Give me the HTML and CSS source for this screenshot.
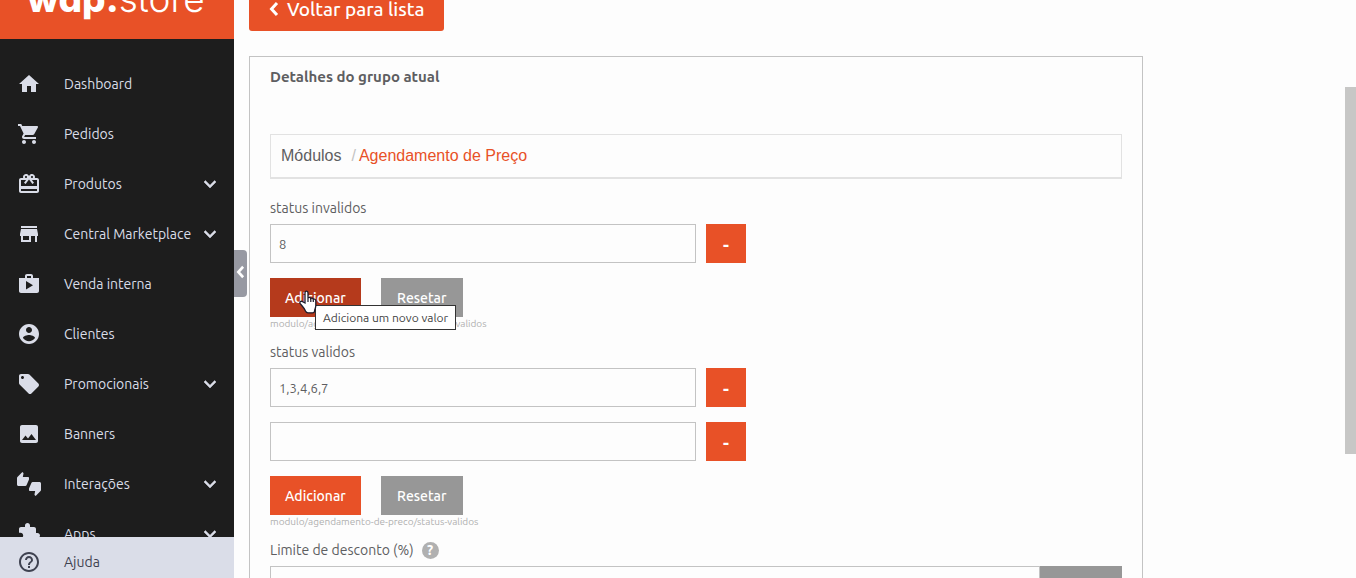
FILE: index.html
```html
<!DOCTYPE html>
<html lang="pt-BR">
<head>
<meta charset="utf-8">
<title>Agendamento de Preço - wap.store</title>
<link rel="stylesheet" href="styles.css">
</head>
<body>
<svg class="sprite" aria-hidden="true">
  <symbol id="chevron" viewBox="0 0 24 24"><path d="M16.59 8.59 12 13.17 7.41 8.59 6 10l6 6 6-6z" stroke="currentColor" stroke-width=".5"/></symbol>
  <symbol id="back" viewBox="0 0 10 16"><path d="M8 2 2.500 8 8 14" fill="none" stroke="currentColor" stroke-width="3"/></symbol>
</svg>
<div class="app">
  <aside class="sidebar">
    <a class="brand" href="#"><span class="brand-bold">wap.</span><span class="brand-thin">store</span></a>
    <nav class="menu">
      <a class="item" href="#"><svg class="icon" viewBox="0 0 24 24"><path d="M10 20v-6h4v6h5v-8h3L12 3 2 12h3v8z"/></svg><span class="item-label">Dashboard</span></a>
      <a class="item" href="#"><svg class="icon" viewBox="0 0 24 24"><path d="M7 18c-1.100 0-1.990.9-1.990 2S5.900 22 7 22s2-.9 2-2-.9-2-2-2zM1 2v2h2l3.600 7.590-1.350 2.450c-.16.28-.25.61-.25.96 0 1.100.9 2 2 2h12v-2H7.420c-.14 0-.25-.11-.25-.25l.03-.12.9-1.630h7.450c.75 0 1.410-.41 1.750-1.030l3.580-6.490c.08-.14.12-.31.12-.48 0-.55-.45-1-1-1H5.210l-.94-2H1zm16 16c-1.100 0-1.990.9-1.990 2s.89 2 1.990 2 2-.9 2-2-.9-2-2-2z"/></svg><span class="item-label">Pedidos</span></a>
      <a class="item" href="#"><svg class="icon" viewBox="0 0 24 24"><path d="M20 6h-2.180c.11-.31.18-.65.18-1 0-1.660-1.340-3-3-3-1.050 0-1.960.54-2.500 1.350l-.5.67-.5-.68C10.960 2.540 10.050 2 9 2 7.340 2 6 3.340 6 5c0 .35.070.69.180 1H4c-1.110 0-1.990.89-1.990 2L2 19c0 1.110.89 2 2 2h16c1.110 0 2-.89 2-2V8c0-1.110-.89-2-2-2zm-5-2c.55 0 1 .45 1 1s-.45 1-1 1-1-.45-1-1 .45-1 1-1zM9 4c.55 0 1 .45 1 1s-.45 1-1 1-1-.45-1-1 .45-1 1-1zm11 15H4v-2h16v2zm0-5H4V8h5.080L7 10.830 8.620 12 11 8.760l1-1.360 1 1.360L15.380 12 17 10.830 14.920 8H20v6z"/></svg><span class="item-label">Produtos</span><svg class="icon" viewBox="0 0 24 24"><use href="#chevron"/></svg></a>
      <a class="item" href="#"><svg class="icon" viewBox="0 0 24 24"><path d="M20 4H4v2h16V4zm1 10v-2l-1-5H4l-1 5v2h1v6h10v-6h4v6h2v-6h1zm-9 4H6v-4h6v4z"/></svg><span class="item-label">Central Marketplace</span><svg class="icon" viewBox="0 0 24 24"><use href="#chevron"/></svg></a>
      <a class="item" href="#"><svg class="icon" viewBox="0 0 24 24"><path fill-rule="evenodd" d="M16 6V4c0-1.110-.89-2-2-2h-4c-1.110 0-2 .89-2 2v2H2v13c0 1.110.89 2 2 2h16c1.110 0 2-.89 2-2V6h-6zm-6-2h4v2h-4V4zM9 17.500V9l7 4.250z"/></svg><span class="item-label">Venda interna</span></a>
      <a class="item" href="#"><svg class="icon" viewBox="0 0 24 24"><path d="M12 2C6.480 2 2 6.480 2 12s4.480 10 10 10 10-4.480 10-10S17.520 2 12 2zm0 3c1.660 0 3 1.340 3 3s-1.340 3-3 3-3-1.340-3-3 1.340-3 3-3zm0 14.200c-2.500 0-4.710-1.280-6-3.220.03-1.990 4-3.080 6-3.080 1.990 0 5.970 1.090 6 3.080-1.290 1.940-3.500 3.220-6 3.220z"/></svg><span class="item-label">Clientes</span></a>
      <a class="item" href="#"><svg class="icon" viewBox="0 0 24 24"><path d="M21.410 11.580l-9-9C12.050 2.220 11.550 2 11 2H4c-1.100 0-2 .9-2 2v7c0 .55.22 1.050.59 1.420l9 9c.36.36.86.58 1.410.58s1.050-.22 1.410-.59l7-7c.37-.36.59-.86.59-1.410s-.23-1.060-.59-1.420zM5.500 7C4.670 7 4 6.330 4 5.500S4.670 4 5.500 4 7 4.670 7 5.500 6.330 7 5.500 7z"/></svg><span class="item-label">Promocionais</span><svg class="icon" viewBox="0 0 24 24"><use href="#chevron"/></svg></a>
      <a class="item" href="#"><svg class="icon" viewBox="0 0 24 24"><path d="M21 19V5c0-1.100-.9-2-2-2H5c-1.100 0-2 .9-2 2v14c0 1.100.9 2 2 2h14c1.100 0 2-.9 2-2zM8.500 13.500l2.500 3.010L14.500 12l4.500 6H5l3.500-4.500z"/></svg><span class="item-label">Banners</span></a>
      <a class="item" href="#"><svg class="icon" viewBox="0 0 24 24"><path d="M12 6c0-.55-.45-1-1-1H5.820l.66-3.180.02-.23c0-.31-.13-.59-.33-.8L5.380 0 .44 4.940C.17 5.210 0 5.590 0 6v6.500c0 .83.67 1.500 1.500 1.500h6.750c.62 0 1.150-.38 1.380-.91l2.260-5.290c.07-.17.11-.36.11-.55V6zm10.500 4h-6.750c-.62 0-1.150.38-1.380.91l-2.260 5.290c-.07.17-.11.36-.11.55V18c0 .55.45 1 1 1h5.180l-.66 3.180-.02.24c0 .31.13.59.33.8l.79.78 4.940-4.940c.27-.27.44-.65.44-1.060v-6.500c0-.83-.67-1.500-1.500-1.500z"/></svg><span class="item-label">Interações</span><svg class="icon" viewBox="0 0 24 24"><use href="#chevron"/></svg></a>
      <a class="item" href="#"><svg class="icon" viewBox="0 0 24 24"><path d="M20.500 11H19V7c0-1.100-.9-2-2-2h-4V3.500C13 2.120 11.880 1 10.500 1S8 2.120 8 3.500V5H4c-1.100 0-1.990.9-1.990 2v3.800H3.500c1.490 0 2.700 1.210 2.700 2.700s-1.210 2.700-2.700 2.700H2V20c0 1.100.9 2 2 2h3.800v-1.500c0-1.490 1.210-2.700 2.700-2.700 1.490 0 2.700 1.210 2.700 2.700V22H17c1.100 0 2-.9 2-2v-4h1.500c1.380 0 2.500-1.120 2.500-2.500S21.880 11 20.500 11z"/></svg><span class="item-label">Apps</span><svg class="icon" viewBox="0 0 24 24"><use href="#chevron"/></svg></a>
    </nav>
    <a class="item help" href="#"><svg class="icon" viewBox="0 0 24 24"><path d="M11 18h2v-2h-2v2zm1-16C6.480 2 2 6.480 2 12s4.480 10 10 10 10-4.480 10-10S17.520 2 12 2zm0 18c-4.410 0-8-3.590-8-8s3.590-8 8-8 8 3.590 8 8-3.590 8-8 8zm0-14c-2.210 0-4 1.790-4 4h2c0-1.100.9-2 2-2s2 .9 2 2c0 2-3 1.750-3 5h2c0-2.250 3-2.500 3-5 0-2.210-1.790-4-4-4z"/></svg><span class="item-label">Ajuda</span></a>
  </aside>

  <main class="main">
    <button class="collapse" type="button" aria-label="Recolher menu"><svg class="collapse-icon" viewBox="0 0 10 16"><use href="#back"/></svg></button>
    <div class="page">
      <a class="back" href="#"><svg class="back-icon" viewBox="0 0 10 16"><use href="#back"/></svg>Voltar para lista</a>

      <section class="card">
        <h2 class="card-title">Detalhes do grupo atual</h2>
        <nav class="crumbs"><a class="crumb" href="#">Módulos</a><span class="crumb-sep">/</span><a class="crumb crumb-current" href="#">Agendamento de Preço</a></nav>

        <form class="form">
          <div class="field">
            <label class="label" for="invalid-1">status invalidos</label>
            <div class="values">
              <div class="value"><input class="input" id="invalid-1" type="text" value="8"><button class="btn minus" type="button">-</button></div>
            </div>
            <div class="actions">
              <button class="btn btn-hover" type="button" aria-describedby="tip">Adicionar</button>
              <button class="btn btn-gray" type="button">Resetar</button>
              <span class="tooltip" id="tip" role="tooltip">Adiciona um novo valor</span>
              <svg class="pointer" viewBox="0 0 18 24" aria-hidden="true"><path d="M6 13V3c0-2.500 3-2.500 3 0v5c.5-1 2.500-1 2.800.5.700-.8 2.200-.5 2.500.8 1-.6 2.500 0 2.500 1.500v5c0 2-1 3-1.300 5.500-.1 1-.8 1.500-2 1.500H9c-1.500 0-2-.7-2.500-1.800C5.500 18 2.500 15.500 1.200 13.500c-1-1.700 1-3 2.500-1.700z" fill="#fff" stroke="#1b1b2b" stroke-width="1.300"/><path d="M9 8v4M11.800 8.500V12M14.300 9.500V12" stroke="#1b1b2b" stroke-width="1.200"/></svg>
            </div>
            <p class="hint">modulo/agendamento-de-preco/status-invalidos</p>
          </div>

          <div class="field">
            <label class="label" for="valid-1">status validos</label>
            <div class="values">
              <div class="value"><input class="input" id="valid-1" type="text" value="1,3,4,6,7"><button class="btn minus" type="button">-</button></div>
              <div class="value"><input class="input" type="text" aria-label="status validos 2"><button class="btn minus" type="button">-</button></div>
            </div>
            <div class="actions">
              <button class="btn" type="button">Adicionar</button>
              <button class="btn btn-gray" type="button">Resetar</button>
            </div>
            <p class="hint">modulo/agendamento-de-preco/status-validos</p>
          </div>

          <div class="field">
            <label class="label" for="limit">Limite de desconto (%)<span class="info">?</span></label>
            <div class="group"><input class="input" id="limit" type="text"><button class="btn btn-gray" type="button" aria-label="Resetar limite"></button></div>
          </div>
        </form>
      </section>
    </div>
    <div class="scroll-thumb"></div>
  </main>
</div>
</body>
</html>
```
FILE: styles.css
```css
* { box-sizing: border-box; }

body {
  margin: 0;
  background: #fdfdfd;
  color: #5e5e61;
  font: 14px/24px Ubuntu, "Noto Sans", sans-serif;
}

a { color: inherit; text-decoration: none; }
.sprite { display: none; }

.app {
  display: flex;
  height: 100vh;
  overflow: hidden;
}

/* Sidebar */
.sidebar {
  display: flex;
  flex-direction: column;
  flex: none;
  width: 234px;
  background: #1d1d1d;
  color: #dadde8;
}

.brand {
  display: flex;
  align-items: flex-end;
  flex: none;
  height: 39px;
  padding: 0 0 21px 27px;
  overflow: hidden;
  background: #e85127;
  color: #fff;
  font: 37px/38px Inter, sans-serif;
  font-feature-settings: "cv11";
}
.brand-bold { font-weight: 800; }
.brand-thin { font-weight: 300; }

.menu {
  flex: 1;
  min-height: 0;
  padding-top: 20px;
  overflow: hidden;
}

.item {
  display: flex;
  align-items: center;
  height: 50px;
  padding: 0 12px 0 17px;
}
.item-label { flex: 1; padding-left: 23px; white-space: nowrap; }
.icon { flex: none; width: 24px; height: 24px; fill: currentColor; }

.help {
  flex: none;
  height: auto;
  padding-top: 13px;
  padding-bottom: 4px;
  background: #dadde8;
  color: #3f4250;
}

/* Main column */
.main {
  position: relative;
  flex: 1;
  min-width: 0;
  overflow: hidden;
}
.page { margin-top: -13px; padding: 0 213px 0 15px; }

.collapse {
  position: absolute;
  top: 250px;
  left: 0;
  display: flex;
  align-items: center;
  justify-content: center;
  width: 13px;
  height: 47px;
  padding: 0 0 3px;
  border: 0;
  border-radius: 0 4px 4px 0;
  background: #9799a2;
  color: #fff;
}
.collapse-icon { width: 9px; height: 14px; }

.scroll-thumb {
  position: absolute;
  top: 87px;
  right: 0;
  width: 11px;
  height: 367px;
  background: #c7c7c6;
}

.back {
  display: inline-flex;
  align-items: center;
  gap: 8px;
  height: 44px;
  padding: 0 20px;
  border-radius: 3px;
  background: #e85127;
  color: #fff;
  font-size: 19px;
  font-weight: 500;
}
.back-icon { width: 10px; height: 16px; }

.card {
  margin-top: 25px;
  padding: 8px 20px 20px;
  border: 1px solid #c3c3c3;
}
.card-title { margin: 0 0 45px; font-size: 15px; line-height: 24px; font-weight: 700; }

.crumbs {
  display: flex;
  padding: 9px 10px;
  border: 1px solid #e2e2e2;
  border-bottom-width: 2px;
  font: 16px/24px "Liberation Sans", sans-serif;
}
.crumb-sep { margin: 0 3px 0 10px; color: #c3c3c3; }
.crumb-current { color: #e85127; }

/* Form */
.form { display: flex; flex-direction: column; gap: 5px; margin-top: 13px; }
.label { display: flex; align-items: center; height: 32px; }
.values { display: flex; flex-direction: column; gap: 15px; }
.value { display: flex; gap: 10px; }

.input {
  width: 50%;
  height: 39px;
  padding: 0 8px;
  border: 1px solid #c3c3c3;
  background: #fdfdfd;
  color: #5e5e61;
  font: 13px Ubuntu, "Noto Sans", sans-serif;
}

.btn {
  height: 39px;
  min-width: 82px;
  padding: 0 15px;
  border: 0;
  background: #e85127;
  color: #fff;
  font: 500 14px Ubuntu, "Noto Sans", sans-serif;
}
.btn-gray { background: #979797; }
.btn-hover { background: #b53a1c; }
.minus { min-width: 40px; padding: 0; font-size: 18px; font-weight: 700; }

.actions { position: relative; display: flex; gap: 20px; margin-top: 15px; }
.hint { margin: 0; color: #b0b0b0; font-size: 10px; line-height: 14px; }

.tooltip {
  position: absolute;
  top: 27px;
  left: 45px;
  padding: 0 7px;
  border: 1px solid #333;
  background: #fff;
  color: #444;
  font: 12px/23px Ubuntu, "Noto Sans", sans-serif;
  white-space: nowrap;
}
.pointer { position: absolute; top: 12px; left: 29px; width: 18px; height: 24px; }

.info {
  width: 17px;
  height: 17px;
  margin-left: 8px;
  border-radius: 50%;
  background: #b0b0b0;
  color: #fff;
  font-size: 14px;
  font-weight: 700;
  line-height: 17px;
  text-align: center;
}

.group { display: flex; }
.group .input { flex: 1; }
```
